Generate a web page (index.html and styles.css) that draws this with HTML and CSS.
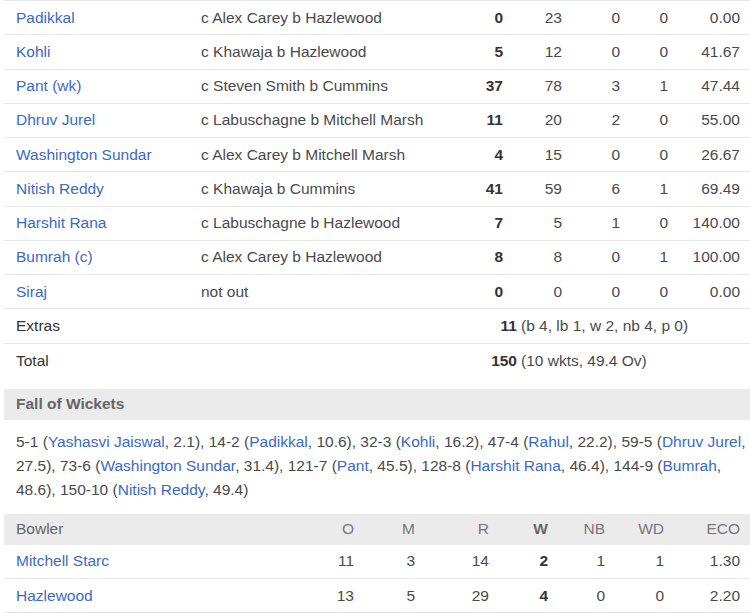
FILE: index.html
```html
<!DOCTYPE html>
<html>
<head>
<meta charset="utf-8">
<link rel="stylesheet" href="styles.css">
</head>
<body>
<div class="page">
  <div class="batting">
    <div class="row bat"><a class="name">Padikkal</a><span class="how">c Alex Carey b Hazlewood</span><b class="num">0</b><span class="num">23</span><span class="num">0</span><span class="num">0</span><span class="num">0.00</span></div>
    <div class="row bat"><a class="name">Kohli</a><span class="how">c Khawaja b Hazlewood</span><b class="num">5</b><span class="num">12</span><span class="num">0</span><span class="num">0</span><span class="num">41.67</span></div>
    <div class="row bat"><a class="name">Pant (wk)</a><span class="how">c Steven Smith b Cummins</span><b class="num">37</b><span class="num">78</span><span class="num">3</span><span class="num">1</span><span class="num">47.44</span></div>
    <div class="row bat"><a class="name">Dhruv Jurel</a><span class="how">c Labuschagne b Mitchell Marsh</span><b class="num">11</b><span class="num">20</span><span class="num">2</span><span class="num">0</span><span class="num">55.00</span></div>
    <div class="row bat"><a class="name">Washington Sundar</a><span class="how">c Alex Carey b Mitchell Marsh</span><b class="num">4</b><span class="num">15</span><span class="num">0</span><span class="num">0</span><span class="num">26.67</span></div>
    <div class="row bat"><a class="name">Nitish Reddy</a><span class="how">c Khawaja b Cummins</span><b class="num">41</b><span class="num">59</span><span class="num">6</span><span class="num">1</span><span class="num">69.49</span></div>
    <div class="row bat"><a class="name">Harshit Rana</a><span class="how">c Labuschagne b Hazlewood</span><b class="num">7</b><span class="num">5</span><span class="num">1</span><span class="num">0</span><span class="num">140.00</span></div>
    <div class="row bat"><a class="name">Bumrah (c)</a><span class="how">c Alex Carey b Hazlewood</span><b class="num">8</b><span class="num">8</span><span class="num">0</span><span class="num">1</span><span class="num">100.00</span></div>
    <div class="row bat"><a class="name">Siraj</a><span class="how">not out</span><b class="num">0</b><span class="num">0</span><span class="num">0</span><span class="num">0</span><span class="num">0.00</span></div>
    <div class="row sum"><span class="label">Extras</span><b class="num">11</b><span class="detail">(b 4, lb 1, w 2, nb 4, p 0)</span></div>
    <div class="row sum last"><span class="label">Total</span><b class="num">150</b><span class="detail">(10 wkts, 49.4 Ov)</span></div>
  </div>

  <div class="bar"><span class="bar-title">Fall of Wickets</span></div>
  <p class="fow">5-1 (<a>Yashasvi Jaiswal</a>, 2.1), 14-2 (<a>Padikkal</a>, 10.6), 32-3 (<a>Kohli</a>, 16.2), 47-4 (<a>Rahul</a>, 22.2), 59-5 (<a>Dhruv Jurel</a>, 27.5), 73-6 (<a>Washington Sundar</a>, 31.4), 121-7 (<a>Pant</a>, 45.5), 128-8 (<a>Harshit Rana</a>, 46.4), 144-9 (<a>Bumrah</a>, 48.6), 150-10 (<a>Nitish Reddy</a>, 49.4)</p>

  <div class="bowling">
    <div class="bowl head"><span class="name">Bowler</span><span class="num">O</span><span class="num">M</span><span class="num">R</span><b class="num">W</b><span class="num">NB</span><span class="num">WD</span><span class="num">ECO</span></div>
    <div class="row bowl"><a class="name">Mitchell Starc</a><span class="num">11</span><span class="num">3</span><span class="num">14</span><b class="num">2</b><span class="num">1</span><span class="num">1</span><span class="num">1.30</span></div>
    <div class="row bowl"><a class="name">Hazlewood</a><span class="num">13</span><span class="num">5</span><span class="num">29</span><b class="num">4</b><span class="num">0</span><span class="num">0</span><span class="num">2.20</span></div>
  </div>
</div>
</body>
</html>
```

FILE: styles.css
```css
html, body {
  margin: 0;
  padding: 0;
  background: #ffffff;
}

.page {
  margin-left: 4px;
  width: 746px;
  font-family: "Liberation Sans", Arial, sans-serif;
  font-size: 15.5px;
  color: #4a4a4a;
}

a {
  color: #3b6ac2;
  text-decoration: none;
}

b {
  font-weight: bold;
  color: #333333;
}

.batting {
  border-top: 1px solid #e6e6e6;
}

.row {
  box-sizing: border-box;
  height: 34.25px;
  border-bottom: 1px solid #e6e6e6;
  display: grid;
  align-items: center;
}

.row.last {
  border-bottom: none;
}

.bat {
  grid-template-columns: 197px 266px 36px 59px 58px 48px 72px;
  padding-right: 10px;
}

.name, .label {
  padding-left: 12px;
  white-space: nowrap;
}

.label {
  color: #333333;
}

.how {
  white-space: nowrap;
}

.num {
  text-align: right;
}

.sum {
  grid-template-columns: 197px 316px auto;
}

.detail {
  padding-left: 4px;
}

.bar {
  margin-top: 11px;
  height: 31px;
  background: #ebebeb;
  display: flex;
  align-items: center;
}

.bar-title {
  padding-left: 12px;
  font-weight: bold;
  color: #666666;
}

.fow {
  margin: 10px 0 12px 0;
  padding: 0 0 0 12px;
  line-height: 24px;
}

.bowl {
  display: grid;
  grid-template-columns: 296px 54px 61px 74px 59px 57px 59px 76px;
  padding-right: 10px;
  align-items: center;
}

.head {
  height: 31px;
  background: #ebebeb;
  color: #777777;
}

.head .name {
  color: #666666;
}

.head b {
  color: #666666;
}
```
